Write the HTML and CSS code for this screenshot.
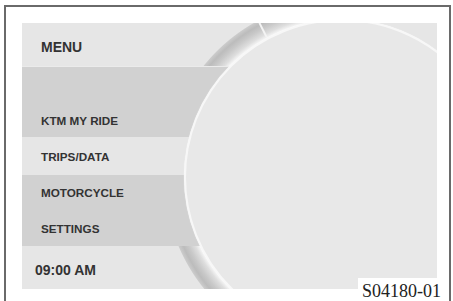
FILE: index.html
```html
<!DOCTYPE html>
<html>
<head>
<meta charset="utf-8">
<link rel="stylesheet" href="styles.css">
</head>
<body>
<div class="frame">
  <div class="panel">
    <div class="bezel"></div>
    <div class="tick"></div>
    <div class="menu">
      <div class="row head">MENU</div>
      <div class="row band empty"></div>
      <div class="row band item">KTM MY RIDE</div>
      <div class="row light item">TRIPS/DATA</div>
      <div class="row band item">MOTORCYCLE</div>
      <div class="row band item">SETTINGS</div>
      <div class="row time">09:00 AM</div>
    </div>
    <div class="dial"></div>
  </div>
  <div class="label">S04180-01</div>
</div>
</body>
</html>
```
FILE: styles.css
```css
html, body {
  margin: 0;
  padding: 0;
  background: #ffffff;
}
body {
  width: 453px;
  height: 301px;
  overflow: hidden;
}
.frame {
  position: relative;
  box-sizing: border-box;
  margin: 5px 0 0 4px;
  width: 447px;
  height: 310px;
  border: 2px solid #6a6a6a;
  border-bottom: none;
  padding: 16px 0 0 16px;
}
.panel {
  position: relative;
  z-index: 0;
  width: 415px;
  height: 266px;
  background: #e6e6e6;
  overflow: hidden;
}
.bezel {
  position: absolute;
  left: 142px;
  top: -24px;
  width: 356px;
  height: 356px;
  border-radius: 50%;
  background: radial-gradient(circle closest-side,
    rgba(0,0,0,0) 0, rgba(0,0,0,0) 157px,
    #f6f6f6 158px, #dedede 162px, #c9c9c9 168px, #bcbcbc 173px, #cbcbcb 177px, rgba(0,0,0,0) 178px);
  clip-path: inset(0 50% 0 0);
  z-index: 0;
}
.tick {
  position: absolute;
  left: 240px;
  top: -1px;
  width: 2px;
  height: 16px;
  background: #f4f4f4;
  transform: rotate(-27deg);
  z-index: 0;
}
.menu {
  position: relative;
  z-index: 1;
  width: 240px;
  display: flex;
  flex-direction: column;
  font-family: "Liberation Sans", Arial, sans-serif;
  font-weight: bold;
  color: #333333;
}
.row {
  display: flex;
  align-items: center;
  box-sizing: border-box;
}
.head {
  height: 43px;
  padding: 5px 0 0 19px;
  font-size: 14px;
  line-height: 16px;
}
.band {
  background: #d1d1d1;
}
.light {
  background: #e6e6e6;
}
.empty {
  height: 35px;
  border-top: 1px solid #ebebeb;
}
.item {
  padding-left: 19px;
  font-size: 11.7px;
  line-height: 13px;
}
.band.item:nth-child(3) {
  height: 36px;
  padding-top: 2px;
}
.light.item {
  height: 38px;
}
.band.item:nth-child(5) {
  height: 35px;
}
.band.item:nth-child(6) {
  height: 36px;
}
.time {
  height: 43px;
  padding: 5px 0 0 13px;
  font-size: 14px;
  line-height: 16px;
}
.dial {
  position: absolute;
  z-index: 2;
  left: 162px;
  top: -4px;
  width: 316px;
  height: 316px;
  box-sizing: border-box;
  border-radius: 50%;
  border: 2px solid #f7f7f7;
  background: #e8e8e8;
  box-shadow: 0 0 1px #ffffff;
}
.label {
  position: absolute;
  z-index: 3;
  left: 352px;
  top: 271px;
  background: #ffffff;
  padding: 3px 4px 6px 4px;
  font-family: "Liberation Serif", "Times New Roman", serif;
  font-size: 18px;
  line-height: 20px;
  color: #222222;
}
```
